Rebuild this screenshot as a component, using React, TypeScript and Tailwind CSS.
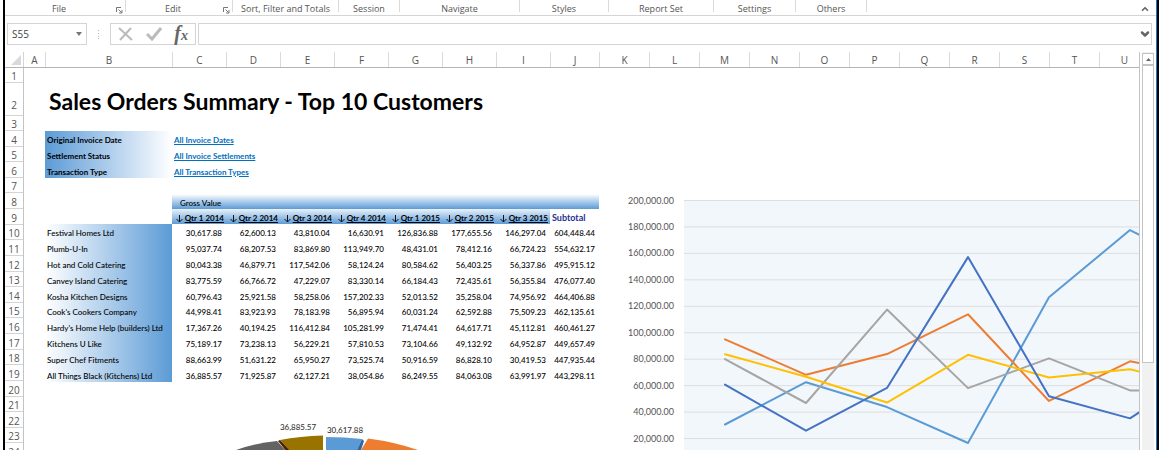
import { ChevronDown, ChevronUp } from "lucide-react";

const ribbonGroups = [
  { label: "File", width: "w-[121px]", launcher: true },
  { label: "Edit", width: "w-[107px]", launcher: true },
  { label: "Sort, Filter and Totals", width: "w-[106px]" },
  { label: "Session", width: "w-[61px]" },
  { label: "Navigate", width: "w-[120px]" },
  { label: "Styles", width: "w-[89px]" },
  { label: "Report Set", width: "w-[105px]" },
  { label: "Settings", width: "w-[82px]" },
  { label: "Others", width: "w-[71px]" },
];

const columns = [
  { name: "A", width: "w-[22px]" },
  { name: "B", width: "w-[127px]" },
  ..."CDEFGHI".split("").map((name) => ({ name, width: "w-[54px]" })),
  { name: "J", width: "w-[49px]" },
  ..."KLMNOPQRSTU".split("").map((name) => ({ name, width: "w-[50px]" })),
];

const filters = [
  { label: "Original Invoice Date", value: "All Invoice Dates" },
  { label: "Settlement Status", value: "All Invoice Settlements" },
  { label: "Transaction Type", value: "All Transaction Types" },
];

const quarters = [
  "Qtr 1 2014",
  "Qtr 2 2014",
  "Qtr 3 2014",
  "Qtr 4 2014",
  "Qtr 1 2015",
  "Qtr 2 2015",
  "Qtr 3 2015",
];

const customers = [
  { name: "Festival Homes Ltd", values: [30617.88, 62600.13, 43810.04, 16630.91, 126836.88, 177655.56, 146297.04], subtotal: 604448.44 },
  { name: "Plumb-U-In", values: [95037.74, 68207.53, 83869.8, 113949.7, 48431.01, 78412.16, 66724.23], subtotal: 554632.17 },
  { name: "Hot and Cold Catering", values: [80043.38, 46879.71, 117542.06, 58124.24, 80584.62, 56403.25, 56337.86], subtotal: 495915.12 },
  { name: "Canvey Island Catering", values: [83775.59, 66766.72, 47229.07, 83330.14, 66184.43, 72435.61, 56355.84], subtotal: 476077.4 },
  { name: "Kosha Kitchen Designs", values: [60796.43, 25921.58, 58258.06, 157202.33, 52013.52, 35258.04, 74956.92], subtotal: 464406.88 },
  { name: "Cook's Cookers Company", values: [44998.41, 83923.93, 78183.98, 56895.94, 60031.24, 62592.88, 75509.23], subtotal: 462135.61 },
  { name: "Hardy's Home Help (builders) Ltd", values: [17367.26, 40194.25, 116412.84, 105281.99, 71474.41, 64617.71, 45112.81], subtotal: 460461.27 },
  { name: "Kitchens U Like", values: [75189.17, 73238.13, 56229.21, 57810.53, 73104.66, 49132.92, 64952.87], subtotal: 449657.49 },
  { name: "Super Chef Fitments", values: [88663.99, 51631.22, 65950.27, 73525.74, 50916.59, 86828.1, 30419.53], subtotal: 447935.44 },
  { name: "All Things Black (Kitchens) Ltd", values: [36885.57, 71925.87, 62127.21, 38054.86, 86249.55, 84063.08, 63991.97], subtotal: 443298.11 },
];

const format = (value: number) =>
  value.toLocaleString("en-US", {
    minimumFractionDigits: 2,
    maximumFractionDigits: 2,
  });

const Ribbon = () => (
  <div className="flex h-4 shrink-0 items-start border-b border-[#d4d4d4] text-[9px] leading-4 text-[#555]">
    {ribbonGroups.map((group) => (
      <div key={group.label} className={`flex h-3 shrink-0 border-r border-[#dadada] ${group.width}`}>
        <span className="flex-1 pt-px text-center whitespace-nowrap">{group.label}</span>
        {group.launcher && (
          <button aria-label={`${group.label} options`} className="flex h-4 w-3 items-center justify-center pt-1">
            <svg width="7" height="7" viewBox="0 0 7 7" fill="none" stroke="#777">
              <path d="M.5 5V.5H5M2.5 2.5l3 3M6 3v3H3" />
            </svg>
          </button>
        )}
      </div>
    ))}
    <button aria-label="Collapse ribbon" className="mt-1 mr-1.5 ml-auto text-[#666]">
      <ChevronUp className="h-2.5 w-2.5" strokeWidth={4} />
    </button>
  </div>
);

const FormulaBar = () => (
  <div className="flex h-9 shrink-0 items-center pr-1 pl-0.5">
    <label className="flex h-[22px] w-20 items-center border border-[#d4d4d4] pr-1 pl-1 text-[10px] text-[#444]">
      <input aria-label="Name box" defaultValue="S55" className="w-0 flex-1 outline-none" />
      <svg width="6" height="4" viewBox="0 0 6 4" fill="#777">
        <path d="M0 0h6L3 4z" />
      </svg>
    </label>
    <svg className="mx-2.5" width="3" height="9" viewBox="0 0 3 9" fill="#b5b5b5">
      <path d="M1 0h1v1H1zM1 3h1v1H1zM1 6h1v1H1zM1 8h1v1H1z" />
    </svg>
    <div className="flex h-[22px] w-[86px] items-center justify-between border border-[#d4d4d4] px-[7px]">
      <button aria-label="Cancel">
        <svg width="15" height="14" viewBox="0 0 15 14" fill="none" stroke="#bbb" strokeWidth="2">
          <path d="M1 1l13 12M13 1L2 13" />
        </svg>
      </button>
      <button aria-label="Enter">
        <svg width="16" height="14" viewBox="0 0 16 14" fill="none" stroke="#bbb" strokeWidth="3">
          <path d="M1 7l5 5L15 1" />
        </svg>
      </button>
      <button aria-label="Insert function" className="font-['Liberation_Serif',serif] text-xl leading-5 font-bold text-[#666] italic">
        f<span className="text-sm">x</span>
      </button>
    </div>
    <div className="ml-0.5 flex h-[22px] flex-1 items-center border border-[#d4d4d4]">
      <input aria-label="Formula" className="h-full w-0 flex-1 px-1 text-[10px] outline-none" />
      <button aria-label="Expand formula bar" className="text-[#666]">
        <ChevronDown className="h-3 w-3" strokeWidth={5} />
      </button>
    </div>
  </div>
);

const ColumnHeaders = () => (
  <div className="flex h-4 shrink-0 border-b border-[#b5b5b5] text-[10px] leading-4 text-[#555]">
    <div className="flex w-[19px] shrink-0 items-end justify-end border-r border-[#d4d4d4] pr-0.5 pb-0.5">
      <svg width="10" height="10" viewBox="0 0 10 10" fill="#d9d9d9">
        <path d="M10 0v10H0z" />
      </svg>
    </div>
    {columns.map((column) => (
      <div key={column.name} className={`shrink-0 border-r border-[#dadada] text-center ${column.width}`}>
        {column.name}
      </div>
    ))}
  </div>
);

const RowHeader = ({ row }: { row: number }) => (
  <div
    className={`flex items-end justify-center overflow-hidden border-b border-[#d4d4d4] ${row === 2 ? "pb-1" : ""}`}
  >
    {row}
  </div>
);

const RowHeaders = () => (
  <div className="w-[19px] shrink-0 border-r border-[#c4c4c4] text-[10px] leading-3 text-[#555]">
    <div className="grid grid-rows-[15px_33px_15px]">
      {[1, 2, 3].map((row) => (
        <RowHeader key={row} row={row} />
      ))}
    </div>
    <div className="grid h-[328px] grid-rows-[repeat(21,minmax(0,1fr))]">
      {Array.from({ length: 21 }, (_, i) => (
        <RowHeader key={i} row={i + 4} />
      ))}
    </div>
  </div>
);

const Filters = () => (
  <dl className="grid h-[47px] grid-cols-[127px_1fr] grid-rows-3">
    {filters.map((filter) => (
      <div key={filter.label} className="col-span-2 grid grid-cols-subgrid">
        <dt className="flex items-center bg-linear-to-r from-[#5b9bd5] to-white pt-[3px] pl-0.5 font-bold">
          {filter.label}
        </dt>
        <dd className="flex items-center pt-[3px] pl-0.5">
          <a href="#filters" className="font-bold text-[#0070c0] underline">
            {filter.value}
          </a>
        </dd>
      </div>
    ))}
  </dl>
);

const SalesTable = () => (
  <table className="h-[188px] w-[554px] table-fixed border-collapse">
    <colgroup>
      <col className="w-[127px]" />
      {quarters.map((quarter) => (
        <col key={quarter} className="w-[54px]" />
      ))}
      <col className="w-[49px]" />
    </colgroup>
    <thead>
      <tr className="h-[15px]">
        <td className="p-0" />
        <th colSpan={8} className="bg-linear-to-b from-white to-[#5b9bd5] p-0 pt-[3px] pl-2 text-left font-medium">
          Gross Value
        </th>
      </tr>
      <tr className="h-[15px]">
        <td className="p-0" />
        {quarters.map((quarter) => (
          <th key={quarter} className="bg-linear-to-b from-[#eaf2fa] to-[#5b9bd5] p-0 pt-[3px] pr-0.5 text-right font-bold whitespace-nowrap">
            <a href="#sort" className="underline">
              <svg className="mr-0.5 inline" width="7" height="8" viewBox="0 0 7 8" fill="none" stroke="#111">
                <path d="M3.500 0v7M.5 4l3 3 3-3" />
              </svg>
              {quarter}
            </a>
          </th>
        ))}
        <th className="p-0 pt-[3px] pl-0.5 text-left text-[9px] font-bold text-[#1f2f8f]">Subtotal</th>
      </tr>
    </thead>
    <tbody>
      {customers.map((customer) => (
        <tr key={customer.name} className="h-[15px]">
          <th className="bg-linear-to-r from-white to-[#5b9bd5] p-0 pt-[3px] pl-0.5 text-left font-medium whitespace-nowrap">
            {customer.name}
          </th>
          {customer.values.map((value, i) => (
            <td key={quarters[i]} className="p-0 pt-[3px] pr-1 text-right">
              {format(value)}
            </td>
          ))}
          <td className="p-0 pt-[3px] pr-1 text-right">{format(customer.subtotal)}</td>
        </tr>
      ))}
    </tbody>
  </table>
);

const PieChart = () => (
  <svg className="mt-[38px] ml-[180px]" width="220" height="60" viewBox="225 420 220 60" fontSize="8" fill="#333">
    <path d="M236 450Q255 443 277 441L287 452V480H225z" fill="#636363" />
    <path d="M278 441L280 440 290 450 293 480H287V452z" fill="#4a1f0c" />
    <path d="M280 440Q300 436 323 435.500V480H289V450z" fill="#997300" />
    <path d="M326 437Q345 437 362 439L357 450V480H326z" fill="#5b9bd5" />
    <path d="M362 439L364 441 361 450V480H357V450z" fill="#2f66a5" />
    <path d="M368 438.500Q395 442 418 450L445 480H361V450z" fill="#ed7d31" />
    <text x="298" y="430" textAnchor="middle">
      36,885.57
    </text>
    <text x="345" y="433" textAnchor="middle">
      30,617.88
    </text>
  </svg>
);

const seriesColors = ["#5b9bd5", "#ed7d31", "#a5a5a5", "#ffc000", "#4472c4"];

const LineChart = () => {
  const x = (i: number) => 101 + i * 81;
  const y = (value: number) => 273 - (value / 20000) * 26.45;
  return (
    <svg width="620" height="290" viewBox="0 0 620 290" fontSize="9" fill="#555">
      <rect x="60" y="8" width="560" height="265" fill="#f2f7fc" />
      {Array.from({ length: 10 }, (_, i) => (i + 1) * 20000).map((tick) => (
        <g key={tick}>
          <path d={`M60 ${y(tick)}H620`} stroke="#dedede" />
          <text x="50" y={y(tick) + 3} textAnchor="end">
            {format(tick)}
          </text>
        </g>
      ))}
      {seriesColors.map((color, s) => (
        <polyline
          key={color}
          points={customers[s].values.map((value, i) => `${x(i)},${y(value)}`).join(" ")}
          fill="none"
          stroke={color}
          strokeWidth="2"
          strokeLinejoin="round"
          strokeLinecap="round"
        />
      ))}
    </svg>
  );
};

const Sheet = () => (
  <div className="flex min-w-0 flex-1 flex-col overflow-hidden border-r border-[#c4c4c4]">
    <ColumnHeaders />
    <div className="flex min-h-0 flex-1">
      <RowHeaders />
      <div className="w-[576px] shrink-0 pt-[15px] pl-[21px] font-['Lato',sans-serif] text-[8px] leading-3 font-medium text-black">
        <h1 className="mb-[15px] h-[33px] pl-1 text-[23px] leading-9 font-bold whitespace-nowrap">
          Sales Orders Summary - Top 10 Customers
        </h1>
        <Filters />
        <div className="h-4" />
        <SalesTable />
        <PieChart />
      </div>
      <div className="shrink-0 pt-[124px] pl-6 font-['Lato',sans-serif]">
        <LineChart />
      </div>
    </div>
  </div>
);

const Scrollbar = () => (
  <div className="mx-0.5 flex w-3 shrink-0 flex-col bg-[#f1f1f1] pt-px">
    <button aria-label="Scroll up" className="flex h-3 items-center justify-center border border-[#c4c4c4] bg-white">
      <svg width="5" height="3" viewBox="0 0 5 3" fill="#666">
        <path d="M0 3h5L2.500 0z" />
      </svg>
    </button>
    <div className="h-3/4 border border-[#c4c4c4] bg-white" />
  </div>
);

const App = () => {
  return (
    <div className="h-screen overflow-hidden bg-white pr-px pl-[3px] font-['Open_Sans',sans-serif]">
      <div className="h-full border-x-2 border-black">
        <div className="flex h-full flex-col border-r border-[#1c78c8]">
          <Ribbon />
          <FormulaBar />
          <div className="flex min-h-0 flex-1">
            <Sheet />
            <Scrollbar />
          </div>
        </div>
      </div>
    </div>
  );
};

export default App;
